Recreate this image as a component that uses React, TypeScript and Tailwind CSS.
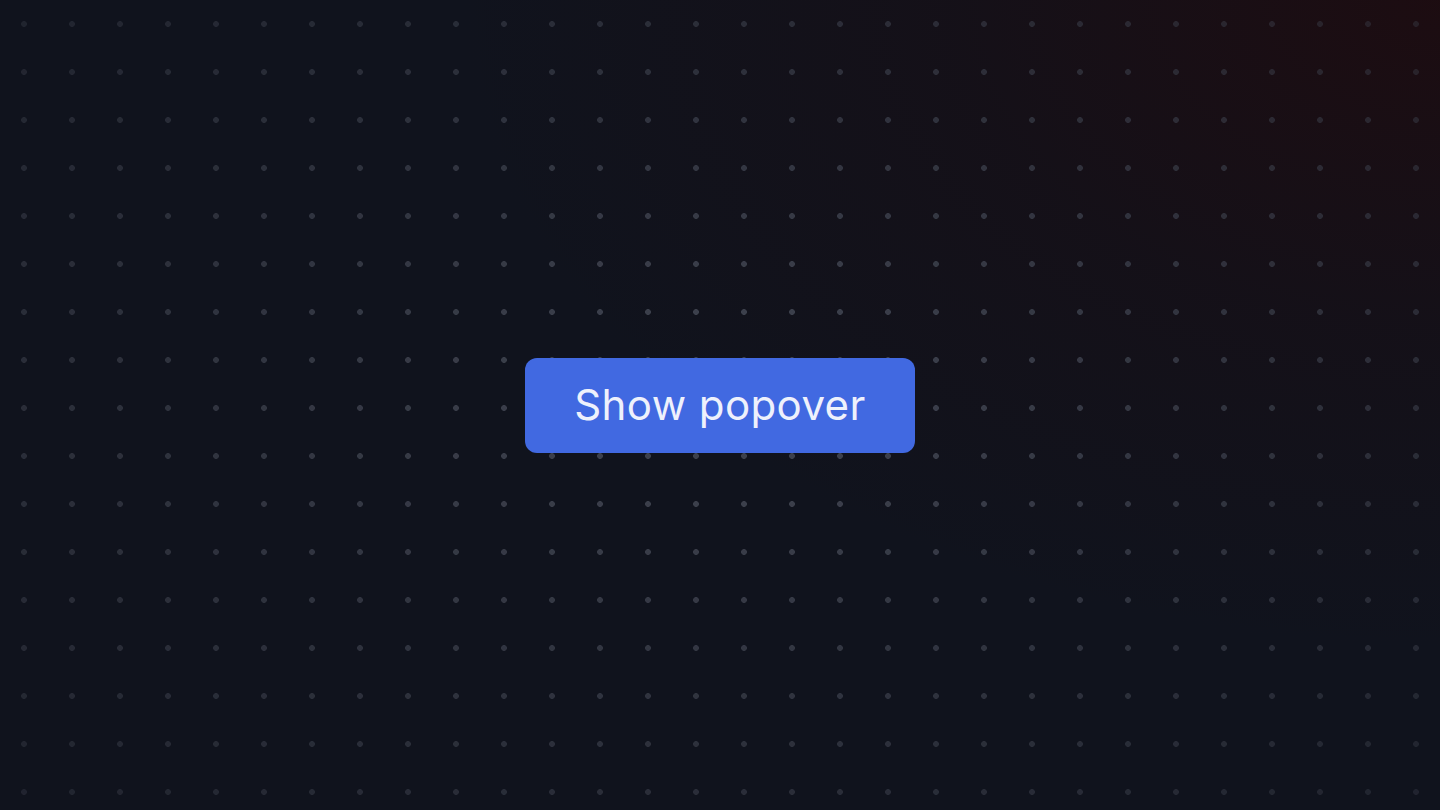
export default function App() {
  return (
    <div className="relative w-full h-[810px] overflow-hidden bg-[#10131d] flex items-center justify-center" style={{ fontFamily: "Inter, 'Noto Sans', sans-serif" }}>
      <div className="absolute inset-0 bg-[radial-gradient(ellipse_85%_100%_at_100%_0%,rgba(30,12,16,0.9)_0%,rgba(24,14,20,0.55)_40%,transparent_80%)]" />
      <div className="absolute inset-0 bg-[radial-gradient(circle_at_center,#3c404c_0,#3c404c_2.6px,transparent_3.2px)] bg-[size:48px_48px] [mask-image:radial-gradient(ellipse_75%_75%_at_50%_50%,black_15%,rgba(0,0,0,0.3)_100%)]" />
      <button className="relative z-10 rounded-xl bg-[#4169e1] px-[49px] h-[95px] text-[42px] leading-none text-[#eef1fc] font-normal tracking-[0.01em]">
        Show popover
      </button>
    </div>
  );
}
